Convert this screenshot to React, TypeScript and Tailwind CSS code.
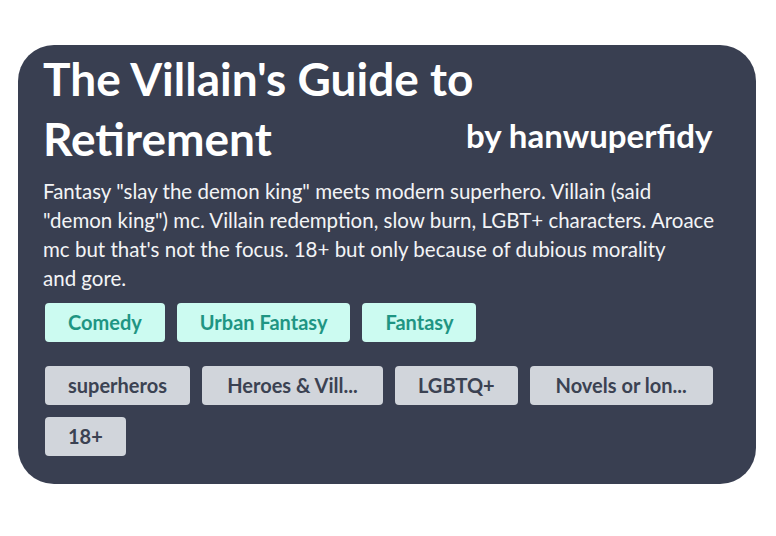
const genres = ["Comedy", "Urban Fantasy", "Fantasy"];
const tags = [
  { label: "superheros", w: "" },
  { label: "Heroes & Vill...", w: "w-[181px]" },
  { label: "LGBTQ+", w: "" },
  { label: "Novels or lon...", w: "w-[183px]" },
  { label: "18+", w: "" },
];

export default function App() {
  return (
    <div className="min-h-screen bg-white pt-[45px] pl-[18px] font-['Lato',sans-serif]">
      <div className="w-[738px] rounded-[36px] bg-[#393f51] pl-[25px] pr-[24px] pt-[4px] pb-[28px]">
        <div className="flex items-end">
          <h1 className="w-[490px] shrink-0 text-[46px] font-bold leading-[60px] text-white">
            The Villain's Guide to Retirement
          </h1>
          <span className="mb-[14px] -ml-[67px] whitespace-nowrap text-[33px] font-bold leading-[40px] text-white">
            by hanwuperfidy
          </span>
        </div>
        <p className="mt-[8px] text-[20.5px] leading-[29px] text-[#f3f4f6]">
          Fantasy "slay the demon king" meets modern superhero. Villain (said
          <br />
          "demon king") mc. Villain redemption, slow burn, LGBT+ characters. Aroace
          <br />
          mc but that's not the focus. 18+ but only because of dubious morality
          <br />
          and gore.
        </p>
        <div className="mt-[10px] flex flex-wrap gap-[12px] pl-[2px]">
          {genres.map((g) => (
            <span
              key={g}
              className="h-[39px] rounded-[4px] bg-[#ccfbf1] px-[23px] text-[20px] font-bold leading-[39px] text-[#1f9583]"
            >
              {g}
            </span>
          ))}
        </div>
        <div className="mt-[24px] flex w-[690px] flex-wrap gap-[12px] pl-[2px]">
          {tags.map((t) => (
            <span
              key={t.label}
              className={`h-[39px] rounded-[4px] bg-[#d1d5db] px-[23px] text-center text-[20px] font-bold leading-[39px] text-[#3b4252] ${t.w}`}
            >
              {t.label}
            </span>
          ))}
        </div>
      </div>
    </div>
  );
}
